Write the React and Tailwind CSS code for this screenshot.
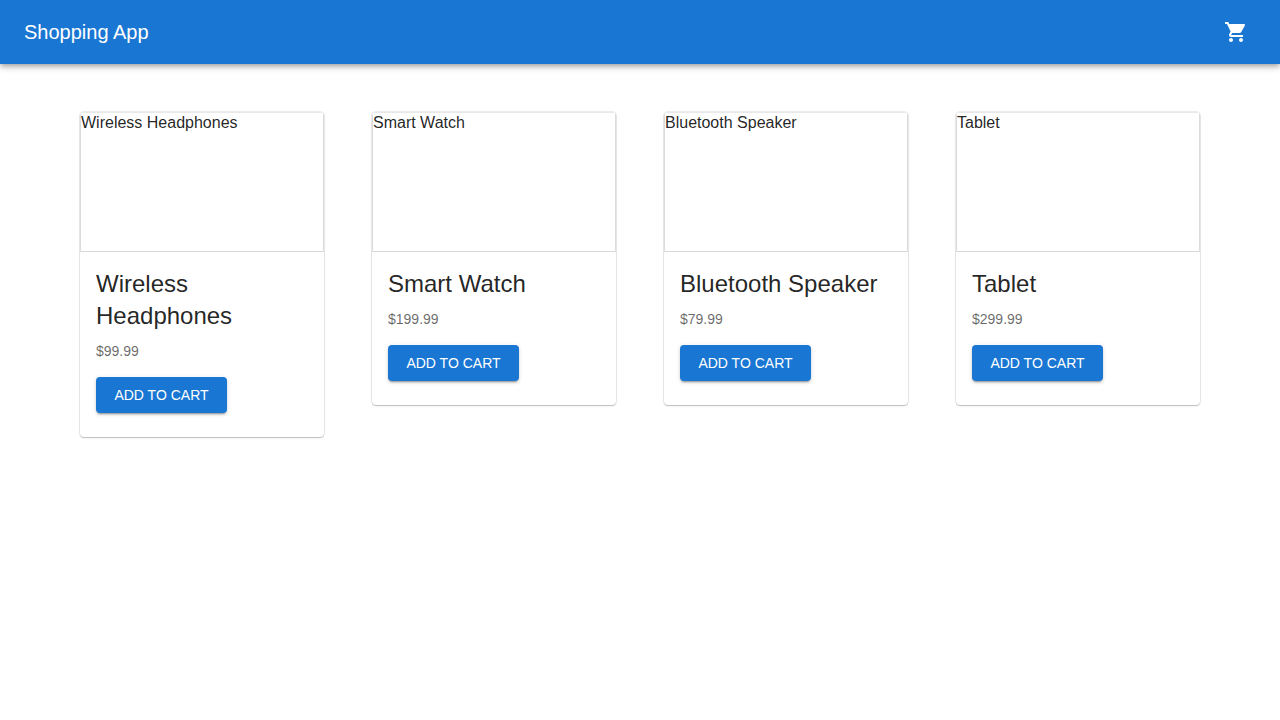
const products = [
  { id: 1, name: 'Wireless Headphones', price: 99.99 },
  { id: 2, name: 'Smart Watch', price: 199.99 },
  { id: 3, name: 'Bluetooth Speaker', price: 79.99 },
  { id: 4, name: 'Tablet', price: 299.99 },
];

function CartIcon() {
  return (
    <svg viewBox="0 0 24 24" className="size-6 fill-current" aria-hidden="true">
      <path d="M7 18c-1.1 0-1.99.9-1.99 2S5.9 22 7 22s2-.9 2-2-.9-2-2-2M1 2v2h2l3.6 7.59-1.35 2.45c-.16.28-.25.61-.25.96 0 1.1.9 2 2 2h12v-2H7.42c-.14 0-.25-.11-.25-.25l.03-.12.9-1.63h7.45c.75 0 1.41-.41 1.75-1.03l3.58-6.49c.08-.14.12-.31.12-.48 0-.55-.45-1-1-1H5.21l-.94-2zm16 16c-1.1 0-1.99.9-1.99 2s.89 2 1.99 2 2-.9 2-2-.9-2-2-2" />
    </svg>
  );
}

function Header() {
  return (
    <header className="flex h-16 items-center justify-between bg-[#1976d2] px-6 text-white shadow-[0_2px_4px_-1px_rgba(0,0,0,0.2),0_4px_5px_0_rgba(0,0,0,0.14),0_1px_10px_0_rgba(0,0,0,0.12)]">
      <h1 className="text-xl leading-8">Shopping App</h1>
      <button type="button" aria-label="Cart" className="rounded-full p-2">
        <CartIcon />
      </button>
    </header>
  );
}

function ProductCard({ product }) {
  return (
    <article className="overflow-hidden rounded-sm bg-white shadow-[0_0_0_1px_rgba(0,0,0,0.07),0_1px_1px_0_rgba(0,0,0,0.14),0_1px_2px_0_rgba(0,0,0,0.08)]">
      <div className="h-[140px] border border-t-[#e9e9e9] border-x-[#dcdcdc] border-b-[#d8d8d8] text-base leading-5">
        {product.name}
      </div>
      <div className="px-4 pt-4 pb-6">
        <h2 className="mb-[9px] text-2xl leading-8">{product.name}</h2>
        <p className="mb-4 text-sm leading-5 text-black/60">${product.price}</p>
        <button
          type="button"
          className="flex h-9 min-w-[131px] items-center justify-center rounded-sm bg-[#1976d2] px-4 text-sm text-white uppercase shadow-[0_3px_1px_-2px_rgba(0,0,0,0.2),0_2px_2px_0_rgba(0,0,0,0.14),0_1px_5px_0_rgba(0,0,0,0.12)]"
        >
          Add to Cart
        </button>
      </div>
    </article>
  );
}

export default function App() {
  return (
    <div className="min-h-screen bg-white font-['Liberation_Sans',Arial,sans-serif] text-black/87">
      <Header />
      <main className="grid grid-cols-1 items-start gap-12 px-6 py-12 sm:grid-cols-2 lg:grid-cols-4 lg:px-20">
        {products.map((product) => (
          <ProductCard key={product.id} product={product} />
        ))}
      </main>
    </div>
  );
}
